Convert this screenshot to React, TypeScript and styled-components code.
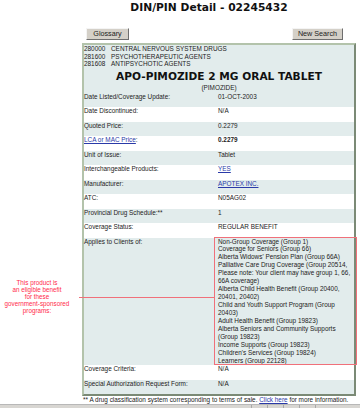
import React from "react";
import styled, { createGlobalStyle } from "styled-components";

const GlobalStyle = createGlobalStyle`
    html, body {
        margin: 0;
        padding: 0;
        background: #fff;
    }
    body {
        font-family: "Liberation Sans", Arial, sans-serif;
        color: #222;
    }
`;

const Page = styled.div`
    position: relative;
    width: 360px;
    height: 408px;
    overflow: hidden;
`;

const Title = styled.h1`
    margin: 0;
    padding: 1px 0 0 58px;
    font: bold 10.7px/14px "DejaVu Sans", Verdana, sans-serif;
    text-align: center;
    color: #111;
`;

const ButtonBar = styled.div`
    display: flex;
    justify-content: space-between;
    width: 257px;
    margin: 13px 0 0 86px;
`;

const GreyButton = styled.button<{ $w: number }>`
    box-sizing: border-box;
    width: ${(p) => p.$w}px;
    height: 12px;
    padding: 0;
    font: 7.2px/10px "Liberation Sans", Arial, sans-serif;
    color: #222;
    background: #d4d0c8;
    border: 1px solid;
    border-color: #f4f4f4 #6e6e6e #6e6e6e #f4f4f4;
`;

const Panel = styled.div`
    box-sizing: border-box;
    width: 274px;
    margin: 3px 0 0 82px;
    border: 2px solid;
    border-color: #b3c3ab #7b8a76 #7b8a76 #b3c3ab;
    background: #fff;
    font-size: 6.4px;
`;

const Header = styled.div`
    background: #e2ecec;
`;

const ClassLine = styled.div`
    display: grid;
    grid-template-columns: 27px 1fr;
    line-height: 7.7px;
`;

const DrugName = styled.div`
    font: bold 10.6px/16px "DejaVu Sans", Verdana, sans-serif;
    text-align: center;
    color: #111;
`;

const Generic = styled.div`
    text-align: center;
    line-height: 8.4px;
`;

const Row = styled.div<{ $shaded: boolean; $h?: number }>`
    display: grid;
    grid-template-columns: 134px 1fr;
    min-height: ${(p) => p.$h ?? 14.5}px;
    line-height: 7.9px;
    background: ${(p) => (p.$shaded ? "#e2ecec" : "#fff")};
`;

const Value = styled.div<{ $bold?: boolean }>`
    font-weight: ${(p) => (p.$bold ? "bold" : "normal")};
`;

const ClientList = styled.div`
    line-height: 7.93px;
`;

const Link = styled.a`
    color: #2a3aa8;
    text-decoration: underline;
`;

const Footnote = styled.div`
    margin-left: 83px;
    font-size: 6.4px;
    line-height: 8px;
`;

const StatusBar = styled.div`
    display: flex;
    height: 4px;
    border-top: 1px solid #b8b8b8;
    background: #d8d6d2;
`;

const StatusCell = styled.div<{ $w?: number }>`
    flex: ${(p) => (p.$w ? `0 0 ${p.$w}px` : "1")};
    border-left: 1px solid #a8a8a8;
    &:first-child {
        border-left: none;
    }
`;

const Note = styled.div`
    position: absolute;
    left: 0;
    top: 278.5px;
    width: 74px;
    text-align: center;
    font-size: 6.3px;
    line-height: 7.1px;
    color: #ff2a4a;
`;

const Pointer = styled.div`
    position: absolute;
    left: 79px;
    top: 297px;
    width: 135px;
    height: 1px;
    background: #f0707a;
`;

const Highlight = styled.div`
    position: absolute;
    left: 214px;
    top: 237px;
    width: 143px;
    height: 128px;
    box-sizing: border-box;
    border: 1px solid #f0707a;
`;

const classes = [
    ["280000", "CENTRAL NERVOUS SYSTEM DRUGS"],
    ["281600", "PSYCHOTHERAPEUTIC AGENTS"],
    ["281608", "ANTIPSYCHOTIC AGENTS"],
];

const clients = [
    "Non-Group Coverage (Group 1)",
    "Coverage for Seniors (Group 66)",
    "Alberta Widows' Pension Plan (Group 66A)",
    "Palliative Care Drug Coverage (Group 20514, Please note: Your client may have group 1, 66, 66A coverage)",
    "Alberta Child Health Benefit (Group 20400, 20401, 20402)",
    "Child and Youth Support Program (Group 20403)",
    "Adult Health Benefit (Group 19823)",
    "Alberta Seniors and Community Supports (Group 19823)",
    "Income Supports (Group 19823)",
    "Children's Services (Group 19824)",
    "Learners (Group 22128)",
];

export default function App() {
    return <Page>
        <GlobalStyle />
        <Title>DIN/PIN Detail - 02245432</Title>
        <ButtonBar>
            <GreyButton $w={43}>Glossary</GreyButton>
            <GreyButton $w={51}>New Search</GreyButton>
        </ButtonBar>
        <Panel>
            <Header>
                {classes.map(([code, name]) => <ClassLine key={code}>
                    <span>{code}</span><span>{name}</span>
                </ClassLine>)}
                <DrugName>APO-PIMOZIDE 2 MG ORAL TABLET</DrugName>
                <Generic>(PIMOZIDE)</Generic>
            </Header>
            <Row $shaded={true}><div>Date Listed/Coverage Update:</div><Value>01-OCT-2003</Value></Row>
            <Row $shaded={false}><div>Date Discontinued:</div><Value>N/A</Value></Row>
            <Row $shaded={true}><div>Quoted Price:</div><Value>0.2279</Value></Row>
            <Row $shaded={false}><div><Link>LCA or MAC Price</Link>:</div><Value $bold>0.2279</Value></Row>
            <Row $shaded={true}><div>Unit of Issue:</div><Value>Tablet</Value></Row>
            <Row $shaded={false}><div>Interchangeable Products:</div><Value><Link>YES</Link></Value></Row>
            <Row $shaded={true}><div>Manufacturer:</div><Value><Link>APOTEX INC.</Link></Value></Row>
            <Row $shaded={false}><div>ATC:</div><Value>N05AG02</Value></Row>
            <Row $shaded={true}><div>Provincial Drug Schedule:**</div><Value>1</Value></Row>
            <Row $shaded={false}><div>Coverage Status:</div><Value>REGULAR BENEFIT</Value></Row>
            <Row $shaded={true} $h={127.5}>
                <div>Applies to Clients of:</div>
                <ClientList>
                    {clients.map((c) => <div key={c}>{c}</div>)}
                </ClientList>
            </Row>
            <Row $shaded={false}><div>Coverage Criteria:</div><Value>N/A</Value></Row>
            <Row $shaded={true}><div>Special Authorization Request Form:</div><Value>N/A</Value></Row>
        </Panel>
        <Footnote>** A drug classification system corresponding to terms of sale. <Link>Click here</Link> for more information.</Footnote>
        <StatusBar>
            <StatusCell />
            <StatusCell $w={15} />
            <StatusCell $w={15} />
            <StatusCell $w={15} />
            <StatusCell $w={15} />
            <StatusCell $w={44} />
        </StatusBar>
        <Note>This product is<br />an eligible benefit<br />for these<br />government-sponsored<br />programs:</Note>
        <Pointer />
        <Highlight />
    </Page>;
}
